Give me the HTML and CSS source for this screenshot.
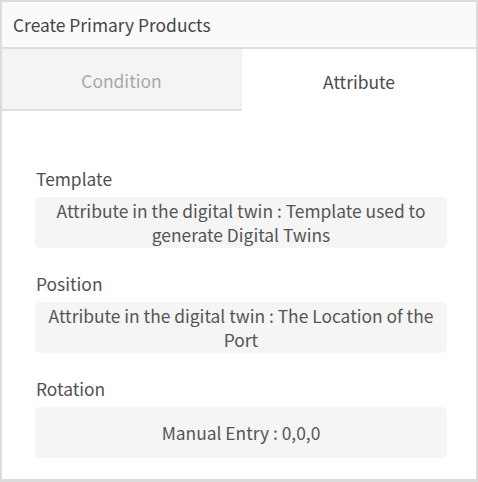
FILE: index.html
```html
<!DOCTYPE html>
<html>
<head>
<meta charset="utf-8">
<link rel="stylesheet" href="styles.css">
</head>
<body>
<div class="panel">
  <div class="header">Create Primary Products</div>
  <div class="tabs">
    <div class="tab inactive">Condition</div>
    <div class="tab active">Attribute</div>
  </div>
  <div class="content">
    <div class="field">
      <div class="label">Template</div>
      <div class="value">Attribute in the digital twin : Template used to generate Digital Twins</div>
    </div>
    <div class="field">
      <div class="label">Position</div>
      <div class="value">Attribute in the digital twin : The Location of the Port</div>
    </div>
    <div class="field">
      <div class="label">Rotation</div>
      <div class="value">Manual Entry : 0,0,0</div>
    </div>
  </div>
</div>
</body>
</html>
```
FILE: styles.css
```css
html, body {
  margin: 0;
  padding: 0;
  background: #ffffff;
}
body {
  font-family: "Noto Sans CJK SC", "Noto Sans", sans-serif;
  color: #555;
}
.panel {
  width: 478px;
  height: 482px;
  box-sizing: border-box;
  border: 2px solid #dcdcdc;
  border-bottom-width: 3px;
  display: flex;
  flex-direction: column;
  overflow: hidden;
}
.header {
  box-sizing: border-box;
  background: #fafafa;
  border-bottom: 2px solid #dedede;
  height: 47px;
  display: flex;
  align-items: center;
  padding-left: 11px;
  font-size: 17.4px;
  color: #454545;
}
.tabs {
  display: flex;
  height: 62px;
}
.tab {
  display: flex;
  align-items: center;
  justify-content: center;
  font-size: 17.4px;
  box-sizing: border-box;
  padding-top: 2px;
}
.tab.inactive {
  width: 240px;
  background: #f3f4f3;
  color: #a8a8a8;
  border-bottom: 2px solid #dedede;
  border-right: 1px solid #ececec;
}
.tab.active {
  flex: 1;
  background: #fff;
  color: #4a4a4a;
}
.content {
  padding: 56px 29px 0 33px;
  display: flex;
  flex-direction: column;
  gap: 24px;
}
.field {
  display: flex;
  flex-direction: column;
  gap: 6px;
}
.label {
  font-size: 17.4px;
  line-height: 24px;
  padding-left: 1px;
  color: #505050;
}
.value {
  min-height: 51px;
  box-sizing: border-box;
  background: #f4f5f4;
  border-radius: 5px;
  font-size: 17.4px;
  line-height: 24px;
  text-align: center;
  padding: 1px 8px;
  display: flex;
  align-items: center;
  justify-content: center;
  color: #555;
}
```
